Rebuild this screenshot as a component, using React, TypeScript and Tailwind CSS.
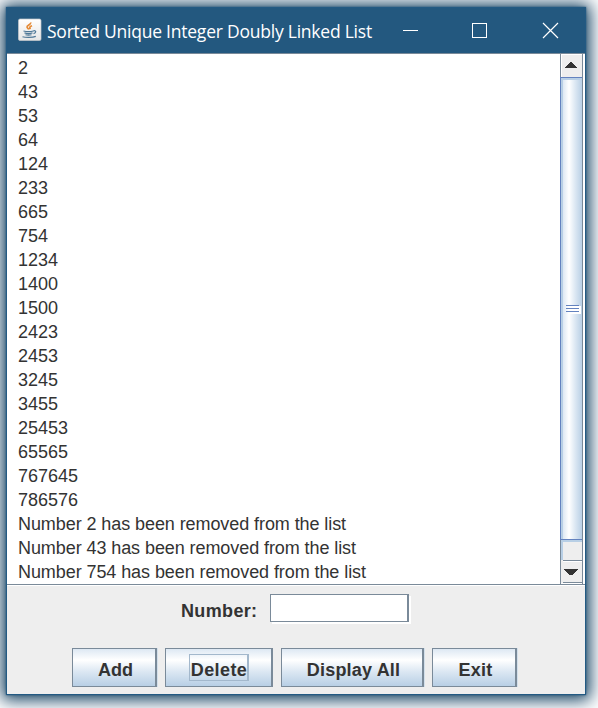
import type { ReactNode } from 'react';

const lines = [
  '2', '43', '53', '64', '124', '233', '665', '754', '1234', '1400', '1500',
  '2423', '2453', '3245', '3455', '25453', '65565', '767645', '786576',
  'Number 2 has been removed from the list',
  'Number 43 has been removed from the list',
  'Number 754 has been removed from the list',
];

function JavaIcon() {
  return (
    <svg width="24" height="24" viewBox="0 0 24 24" fill="none" className="-mt-0.5">
      <defs>
        <linearGradient id="tile" x1="0" y1="0" x2="0" y2="1">
          <stop offset="0" stopColor="#fff" />
          <stop offset="1" stopColor="#e6e6e6" />
        </linearGradient>
      </defs>
      <rect x="0.500" y="1" width="22.500" height="21.500" rx="1.500" fill="url(#tile)" stroke="#c5c9cc" strokeWidth="0.700" />
      <path d="M12.500 4.500c1 2-4 2.800-3.500 4.700.2 1 1.500 1.300 1.800 2.300M14 7.800c-2.200.8-3 1.700-1.500 3.200" stroke="#e58a35" strokeWidth="1.700" />
      <path d="M5.500 13c3 .8 7 .8 10 0M6.500 14.900c2.500.8 5.500.8 8 0M7.500 16.700c2 .6 4 .6 6 0M15.500 12.800c3.200-.6 2.700 2.300 0 2.900M4.500 18.700c3 1 10 1 13.300-.3" stroke="#4f7897" strokeWidth="1.200" />
    </svg>
  );
}

function MetalButton({ className, children }: { className: string; children: ReactNode }) {
  return (
    <button
      className={`flex h-[39px] items-center justify-center border border-r-2 border-[#7a8a99] bg-[linear-gradient(#dde8f3,#fff_30%,#dde8f3_60%,#b8cfe5)] pt-[5px] text-[18px] leading-6 font-bold whitespace-nowrap ${className}`}
    >
      {children}
    </button>
  );
}

function ScrollBar() {
  return (
    <div className="flex w-[23px] flex-col border-x border-[#7a8a99] bg-[#eee]">
      <div className="flex h-[23px] items-center justify-center border-t border-l border-white">
        <svg width="12" height="6" viewBox="0 0 12 6" shapeRendering="crispEdges" className="-mt-0.5 -ml-[3px]">
          <path d="M5 0h2v1h1v1h1v1h1v1h1v1h1v1H0V5h1V4h1V3h1V2h1V1h1z" fill="#333" />
        </svg>
      </div>
      <div className="-ml-px flex h-[463px] flex-col items-start justify-center border-y border-l border-[#6382bf] bg-[linear-gradient(90deg,#b8cfe5_0_2px,#dde8f3_2px,#fff_8px,#dde8f3_14px,#b8cfe5)] pt-0.5 pl-[5px] shadow-[inset_0_2px_#b8cfe5]">
        <div className="relative h-[9px] w-[15px]">
          <div className="absolute inset-y-px right-0 left-0.5 h-2 bg-white" />
          <div className="relative flex flex-col gap-0.5">
            <i className="h-px w-[13px] bg-[#6382bf]" />
            <i className="h-px w-[13px] bg-[#6382bf]" />
            <i className="h-px w-[13px] bg-[#6382bf]" />
          </div>
        </div>
      </div>
      <div className="h-5 border-t-2 border-l-2 border-[#b8cfe5]" />
      <div className="ml-0.5 flex h-[23px] items-center justify-center border-y border-[#7a8a99] shadow-[inset_0_1px_white]">
        <svg width="14" height="6" viewBox="0 0 14 6" shapeRendering="crispEdges" className="mr-[3px]">
          <path d="M0 0h14v1h-1v1h-1v1h-1v1h-1v1H9v1H5V5H4V4H3V3H2V2H1V1H0z" fill="#333" />
        </svg>
      </div>
      <div className="h-px bg-white" />
    </div>
  );
}

export default function App() {
  return (
    <div className="h-[708px] w-[598px] overflow-hidden bg-white pt-2 pl-[7px] font-['Liberation_Sans',Arial,sans-serif] text-[18px] text-[#333]">
      <main className="h-[686px] w-[578px] bg-[#eee] shadow-[0_0_0_1px_#235a83,0_0_2px_1px_#255579,0_1px_16px_5px_#123f60]">
        <header className="flex h-[45px] items-center bg-[#23587f] pl-[11px] text-white">
          <JavaIcon />
          <h1 className="ml-[5px] w-[340px] pt-px font-['Open_Sans','Noto_Sans',sans-serif] text-[17.5px] leading-6 font-normal tracking-[-0.23px] whitespace-nowrap">Sorted Unique Integer Doubly Linked List</h1>
          <svg width="160" height="17" viewBox="0 0 160 17" fill="none" stroke="white" className="ml-4">
            <path d="M0 8.500h15M69.500 1.500h14v14h-14z" shapeRendering="crispEdges" />
            <path d="m140 1 15 15m0-15-15 15" strokeWidth="1.200" />
          </svg>
        </header>
        <section className="flex h-[532px] border-y border-[#7a8a99] bg-white">
          <div className="w-[553px] pt-0.5 pl-[11px]">
            {lines.map((line) => (
              <p key={line} className={`h-6 leading-6 whitespace-pre ${line.startsWith('N') ? 'tracking-[-0.08px]' : ''}`}>{line}</p>
            ))}
          </div>
          <ScrollBar />
        </section>
        <section className="border-t border-white">
          <div className="flex h-[38px] items-start pt-2 pl-[174px]">
            <label htmlFor="number" className="w-[89px] pt-[5px] leading-6 font-bold tracking-[0.35px]">Number:</label>
            <input id="number" className="h-7 w-[139px] border border-r-2 border-[#7a8a99] bg-white shadow-[2px_2px_white]" />
          </div>
          <div className="flex pt-6 pl-[65px]">
            <MetalButton className="mr-2 w-[85px] pl-[3px] shadow-[1px_0_#d3e0eb]">Add</MetalButton>
            <MetalButton className="mr-2 w-[108px]">
              <span className="-mt-[5px] flex h-[27px] w-[60px] items-center justify-center border border-r-2 border-[#a3b8cc] pt-[5px] pl-0.5 tracking-[0.4px]">Delete</span>
            </MetalButton>
            <MetalButton className="mr-2 w-[143px] pl-[3px] tracking-[0.18px] shadow-[1px_0_#d3e0eb]">Display All</MetalButton>
            <MetalButton className="w-[85px] pl-[3px] tracking-[0.3px] shadow-[1px_0_#d3e0eb]">Exit</MetalButton>
          </div>
        </section>
      </main>
    </div>
  );
}
